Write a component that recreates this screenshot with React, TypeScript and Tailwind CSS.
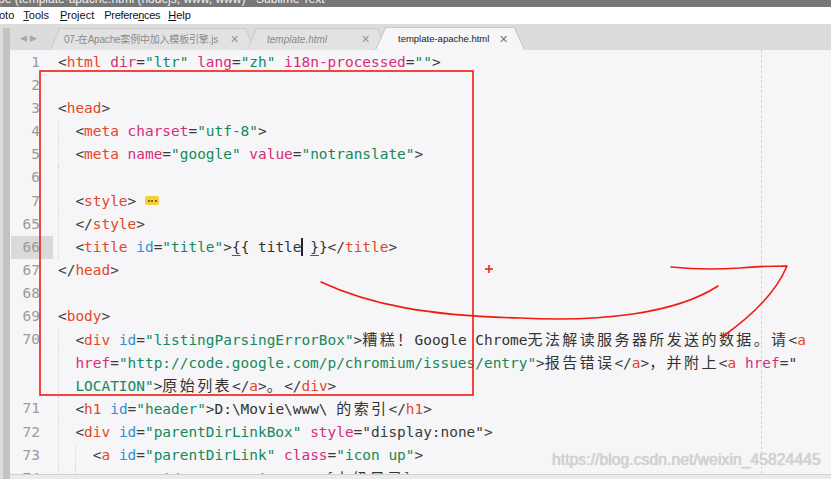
import React from "react";

type Tok = [string, string];

const C: Record<string, string> = {
  p: "text-[#3a3a3a]",
  t: "text-[#e4472a]",
  a: "text-[#d92b7c]",
  i: "text-[#2d8fd5]",
  s: "text-[#13895c]",
  x: "text-[#333333]",
};

function Toks({ toks }: { toks: Tok[] }) {
  return (
    <>
      {toks.map(([txt, k], i) =>
        k === "c" ? (
          <span
            key={i}
            className="text-[#333333] text-[15px] tracking-[2.4px] font-['Noto_Sans_CJK_SC',sans-serif]"
          >
            {txt}
          </span>
        ) : (
          <span key={i} className={C[k]}>
            {txt}
          </span>
        )
      )}
    </>
  );
}

function Row({
  num,
  indent = 0,
  guides = 0,
  children,
  hl = false,
}: {
  num?: string;
  indent?: number;
  guides?: number;
  children?: React.ReactNode;
  hl?: boolean;
}) {
  return (
    <div className="flex h-[23.12px] items-center">
      <div className="relative w-[48px] h-full flex items-center justify-end pr-[18px] text-[#9b9b9b]">
        {hl && <div className="absolute left-[1px] top-0 w-[42px] h-full bg-[#dadada]" />}
        <span className="relative">{num}</span>
      </div>
      <div className="flex items-center h-full whitespace-pre">
        {Array.from({ length: indent }).map((_, i) => (
          <span
            key={i}
            className={
              "inline-block w-[17.4px] h-full " +
              (i < guides ? "border-l border-dotted border-[#d6d6d6]" : "")
            }
          />
        ))}
        <span>{children}</span>
      </div>
    </div>
  );
}

export default function App() {
  const mono = "font-['DejaVu_Sans_Mono','Noto_Sans_CJK_SC',monospace] text-[14.45px]";
  return (
    <div className="relative w-[831px] h-[479px] overflow-hidden bg-[#f6f5f7] font-['Liberation_Sans',sans-serif]">
      {/* title bar */}
      <div className="h-[7px] bg-[#787878] overflow-hidden">
        <div className="-mt-[7px] leading-[12px] text-[12px] text-[#f2f2f2] -ml-[2px] whitespace-nowrap font-['Liberation_Sans',sans-serif]">
          pe (template-apache.html (nodejs, www, www) - Sublime Text
        </div>
      </div>
      {/* menu bar */}
      <div className="h-[17px] bg-white flex items-center text-[11px] text-[#111] whitespace-nowrap">
        <span className="-ml-[1px]">oto</span>
        <span className="ml-[9px]"><u>T</u>ools</span>
        <span className="ml-[11px]"><u>P</u>roject</span>
        <span className="ml-[10px] tracking-[-0.3px]">Prefere<u>n</u>ces</span>
        <span className="ml-[8px]"><u>H</u>elp</span>
      </div>
      {/* tab bar */}
      <div className="h-[26px] bg-[#dcdcdc] flex items-end">
        <div className="w-[10px] h-[22px] bg-[#c3c3c3] border-l-[3px] border-[#dcdcdc]" />
        <div className="w-[40px] h-full flex items-center pl-[10px] gap-[3px] text-[9px] text-[#a8a8a8] pt-[3px]">
          <span>◀</span>
          <span>▶</span>
        </div>
        <div className="relative w-[205px] h-[22px] [clip-path:polygon(9px_0,calc(100%-9px)_0,100%_100%,0_100%)] bg-[#cdcdcd]">
          <div className="absolute inset-x-[1px] top-[1px] bottom-0 [clip-path:polygon(9px_0,calc(100%-9px)_0,100%_100%,0_100%)] bg-[#e2e2e2] flex items-center pl-[13px] text-[10px] text-[#8a8a8a] whitespace-nowrap">
            <span className="font-['Liberation_Sans','Noto_Sans_CJK_SC',sans-serif] tracking-[-0.2px]">07-在Apache案例中加入模板引擎.js</span>
            <span className="ml-[12px] text-[11px] text-[#999]">✕</span>
          </div>
        </div>
        <div className="relative -ml-[8px] w-[140px] h-[22px] [clip-path:polygon(9px_0,calc(100%-9px)_0,100%_100%,0_100%)] bg-[#cdcdcd]">
          <div className="absolute inset-x-[1px] top-[1px] bottom-0 [clip-path:polygon(9px_0,calc(100%-9px)_0,100%_100%,0_100%)] bg-[#e2e2e2] flex items-center pl-[19px] text-[10px] text-[#8a8a8a] italic whitespace-nowrap">
            <span>template.html</span>
            <span className="ml-[34px] not-italic text-[11px] text-[#999]">✕</span>
          </div>
        </div>
        <div className="relative z-10 -ml-[12px] w-[150px] h-[23px] [clip-path:polygon(10px_0,calc(100%-10px)_0,100%_100%,0_100%)] bg-[#c8c8c8]">
          <div className="absolute inset-x-[1px] top-[1px] bottom-0 [clip-path:polygon(10px_0,calc(100%-10px)_0,100%_100%,0_100%)] bg-[#f6f5f7] flex items-center pl-[22px] text-[9.5px] text-[#222] whitespace-nowrap">
            <span>template-apache.html</span>
            <span className="ml-[10px] text-[11px] text-[#777]">✕</span>
          </div>
        </div>
      </div>
      {/* editor */}
      <div className={"relative flex h-[424px] " + mono}>
        <div className="w-[10px] h-full bg-[#c3c3c3] border-l-[3px] border-[#dcdcdc]" />
        <div className="flex-1 flex flex-col pt-[1px] leading-[23.1px] overflow-hidden">
          <Row num="1">
            <Toks toks={[["<", "p"], ["html", "t"], [" ", "x"], ["dir", "a"], ["=", "p"], ['"ltr"', "s"], [" ", "x"], ["lang", "a"], ["=", "p"], ['"zh"', "s"], [" ", "x"], ["i18n-processed", "a"], ["=", "p"], ['""', "s"], [">", "p"]]} />
          </Row>
          <Row num="2" />
          <Row num="3">
            <Toks toks={[["<", "p"], ["head", "t"], [">", "p"]]} />
          </Row>
          <Row num="4" indent={1} guides={1}>
            <Toks toks={[["<", "p"], ["meta", "t"], [" ", "x"], ["charset", "a"], ["=", "p"], ['"utf-8"', "s"], [">", "p"]]} />
          </Row>
          <Row num="5" indent={1} guides={1}>
            <Toks toks={[["<", "p"], ["meta", "t"], [" ", "x"], ["name", "a"], ["=", "p"], ['"google"', "s"], [" ", "x"], ["value", "a"], ["=", "p"], ['"notranslate"', "s"], [">", "p"]]} />
          </Row>
          <Row num="6" indent={1} guides={1} />
          <Row num="7" indent={1} guides={1}>
            <Toks toks={[["<", "p"], ["style", "t"], [">", "p"]]} />
            <span className="inline-flex items-center justify-center ml-[9px] w-[14px] h-[9px] rounded-[2px] bg-[#f5cf3b] align-middle relative -top-[1px]">
              <span className="flex gap-[1.5px]">
                <span className="w-[2px] h-[2px] bg-[#5a4a10] rounded-full" />
                <span className="w-[2px] h-[2px] bg-[#5a4a10] rounded-full" />
                <span className="w-[2px] h-[2px] bg-[#5a4a10] rounded-full" />
              </span>
            </span>
          </Row>
          <Row num="65" indent={1} guides={1}>
            <Toks toks={[["</", "p"], ["style", "t"], [">", "p"]]} />
          </Row>
          <Row num="66" indent={1} guides={1} hl>
            <Toks toks={[["<", "p"], ["title", "t"], [" ", "x"], ["id", "i"], ["=", "p"], ['"title"', "s"], [">", "p"]]} />
            <span className="text-[#333] underline underline-offset-[3px] decoration-[#555]">{"{"}</span>
            <span className="text-[#333]">{"{ title"}</span>
            <span className="inline-block w-[2px] h-[18px] bg-[#222] align-middle -mr-[2px] relative -top-[1px]" />
            <span className="text-[#333]">{" "}</span>
            <span className="text-[#333] underline underline-offset-[3px] decoration-[#555]">{"}"}</span>
            <span className="text-[#333]">{"}"}</span>
            <Toks toks={[["</", "p"], ["title", "t"], [">", "p"]]} />
          </Row>
          <Row num="67">
            <Toks toks={[["</", "p"], ["head", "t"], [">", "p"]]} />
          </Row>
          <Row num="68" />
          <Row num="69">
            <Toks toks={[["<", "p"], ["body", "t"], [">", "p"]]} />
          </Row>
          <Row num="70" indent={1} guides={1}>
            <Toks toks={[["<", "p"], ["div", "t"], [" ", "x"], ["id", "i"], ["=", "p"], ['"listingParsingErrorBox"', "s"], [">", "p"], ["糟糕！", "c"], ["Google Chrome", "x"], ["无法解读服务器所发送的数据。请", "c"], ["<", "p"], ["a", "t"]]} />
          </Row>
          <Row indent={1} guides={1}>
            <Toks toks={[["href", "a"], ["=", "p"], ['"http://code.google.com/p/chromium/issues/entry"', "s"], [">", "p"], ["报告错误", "c"], ["</", "p"], ["a", "t"], [">", "p"], ["，并附上", "c"], ["<", "p"], ["a", "t"], [" ", "x"], ["href", "a"], ["=", "p"], ['"', "p"]]} />
          </Row>
          <Row indent={1} guides={1}>
            <Toks toks={[['LOCATION"', "s"], [">", "p"], ["原始列表", "c"], ["</", "p"], ["a", "t"], [">", "p"], ["。", "c"], ["</", "p"], ["div", "t"], [">", "p"]]} />
          </Row>
          <Row num="71" indent={1} guides={1}>
            <Toks toks={[["<", "p"], ["h1", "t"], [" ", "x"], ["id", "i"], ["=", "p"], ['"header"', "s"], [">", "p"], ["D:\\Movie\\www\\ ", "x"], ["的索引", "c"], ["</", "p"], ["h1", "t"], [">", "p"]]} />
          </Row>
          <Row num="72" indent={1} guides={1}>
            <Toks toks={[["<", "p"], ["div", "t"], [" ", "x"], ["id", "i"], ["=", "p"], ['"parentDirLinkBox"', "s"], [" ", "x"], ["style", "a"], ["=", "p"], ['"display:none"', "p"], [">", "p"]]} />
          </Row>
          <Row num="73" indent={2} guides={2}>
            <Toks toks={[["<", "p"], ["a", "t"], [" ", "x"], ["id", "i"], ["=", "p"], ['"parentDirLink"', "s"], [" ", "x"], ["class", "a"], ["=", "p"], ['"icon up"', "s"], [">", "p"]]} />
          </Row>
          <Row num="74" indent={3} guides={2}>
            <Toks toks={[["<", "p"], ["span", "t"], [" ", "x"], ["id", "i"], ["=", "p"], ['"parentDirText"', "s"], [">", "p"], ["[上级目录]", "c"], ["</", "p"], ["span", "t"], [">", "p"]]} />
          </Row>
        </div>
        {/* ruler */}
        <div className="absolute left-[761px] top-0 h-full border-l border-dashed border-[#d4d4d4]" />
      </div>
      {/* bottom strip */}
      <div className="flex h-[5px]">
        <div className="w-[10px] h-full bg-[#c3c3c3] border-l-[3px] border-[#dcdcdc]" />
        <div className="flex-1 bg-[#ebebeb] border-t border-[#d2d2d2]" />
      </div>

      {/* watermark */}
      <div className="absolute left-[552px] top-[450px] text-[15.8px] leading-[20px] text-[#d2d2d2] whitespace-nowrap font-['Liberation_Sans',sans-serif] [text-shadow:0_0_1px_#bdbdbd]">
        https://blog.csdn.net/weixin_45824445
      </div>

      {/* red annotations */}
      <svg className="absolute inset-0 pointer-events-none" width="831" height="479" viewBox="0 0 831 479" fill="none">
        <rect x="40" y="71" width="433" height="324" stroke="#f21a0f" strokeWidth="1.6" />
        <path d="M321 282 C370 305 430 316 520 318 C600 322 675 314 718 286" stroke="#f21a0f" strokeWidth="1.6" strokeLinecap="round" />
        <path d="M671 267 C690 269 710 270 740 268 C760 266 775 266 787 266 Q772 302 722 337" stroke="#f21a0f" strokeWidth="1.6" strokeLinecap="round" strokeLinejoin="round" />
        <path d="M485 269 H493 M489 265 V273" stroke="#f21a0f" strokeWidth="1.5" />
      </svg>
    </div>
  );
}
